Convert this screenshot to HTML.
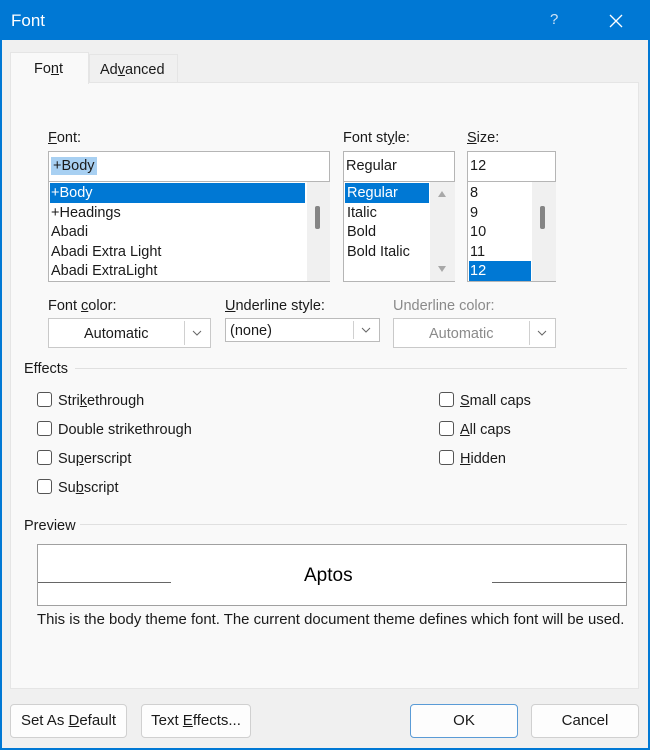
<!DOCTYPE html>
<html><head><style>
*{margin:0;padding:0;box-sizing:border-box}
body{width:650px;height:750px;background:#0078d4;font-family:"Liberation Sans",sans-serif;font-size:14.5px;color:#1a1a1a;position:relative;overflow:hidden}
.a{position:absolute}
.win{left:2px;top:40px;width:646px;height:708px;background:#f0f0f0}
.panel{left:10px;top:82px;width:629px;height:607px;background:#f9f9f9;border:1px solid #e5e5e5}
.box{background:#fff;border:1px solid #b5b5b5}
.sel{background:#0078d4;color:#fff}
.sb{background:#f0f0f0}
.thumb{background:#858585;border-radius:2px;width:5px}
.cb{width:15px;height:15px;border:1px solid #555;border-radius:3px;background:#fff}
.btn{background:#fdfdfd;border:1px solid #d0d0d0;border-radius:4px;text-align:center;line-height:31px;font-size:15px}
.dd{background:#fff;border:1px solid #c9c9c9}
.ddb{position:absolute;border-left:1px solid #d0d0d0;width:24px;top:2px;bottom:2px;right:2px}
.ddb svg{position:absolute;left:7px;top:50%;margin-top:-3px}
.hr{height:1px;background:#e0e0e0}
u{text-decoration:underline}
</style></head><body>
<div class="a" style="left:11px;top:11px;color:#fff;font-size:17px">Font</div>
<div class="a" style="left:550px;top:11px;color:#cfe3f5;font-size:15px">?</div>
<svg class="a" style="left:609px;top:14px" width="14" height="14"><path d="M1 1L13 13M13 1L1 13" stroke="#fff" stroke-width="1.3"/></svg>
<div class="a win"></div>
<div class="a panel"></div>
<div class="a" style="left:10px;top:52px;width:79px;height:32px;background:#f9f9f9;border:1px solid #e5e5e5;border-bottom:none"></div>
<div class="a" style="left:34px;top:61px">Fo<u>n</u>t</div>
<div class="a" style="left:89px;top:54px;width:89px;height:28px;background:#f0f0f0;border:1px solid #e5e5e5;border-bottom:none"></div>
<div class="a" style="left:100px;top:62px">Ad<u>v</u>anced</div>

<div class="a" style="left:48px;top:130px"><u>F</u>ont:</div>
<div class="a" style="left:343px;top:130px">Font st<u>y</u>le:</div>
<div class="a" style="left:467px;top:130px"><u>S</u>ize:</div>

<div class="a box" style="left:48px;top:151px;width:282px;height:31px"><span class="a" style="left:2px;top:5px;background:#a8d0f2;padding:1px 2px">+Body</span></div>
<div class="a box" style="left:343px;top:151px;width:112px;height:31px"><span class="a" style="left:2px;top:6px">Regular</span></div>
<div class="a box" style="left:467px;top:151px;width:89px;height:31px"><span class="a" style="left:2px;top:6px">12</span></div>

<div class="a box" style="left:48px;top:181px;width:282px;height:101px;line-height:19.6px">
 <div class="a sb" style="left:258px;top:0;width:23px;height:99px"></div><div class="a thumb" style="left:266px;top:24px;height:23px"></div>
 <div class="a sel" style="left:1px;top:1px;width:255px;height:20px"></div>
 <div class="a" style="left:2px;top:2px;color:#fff">+Body</div>
 <div class="a" style="left:2px;top:22px">+Headings</div>
 <div class="a" style="left:2px;top:41px">Abadi</div>
 <div class="a" style="left:2px;top:61px">Abadi Extra Light</div>
 <div class="a" style="left:2px;top:80px">Abadi ExtraLight</div>
</div>
<div class="a box" style="left:343px;top:181px;width:112px;height:101px;line-height:19.6px">
 <div class="a sb" style="left:86px;top:0;width:25px;height:99px"></div>
 <svg class="a" style="left:93px;top:8px" width="10" height="8"><path d="M1 7L5 1L9 7Z" fill="#a8a8a8"/></svg>
 <svg class="a" style="left:93px;top:83px" width="10" height="8"><path d="M1 1L5 7L9 1Z" fill="#a8a8a8"/></svg>
 <div class="a sel" style="left:1px;top:1px;width:84px;height:20px"></div>
 <div class="a" style="left:3px;top:2px;color:#fff">Regular</div>
 <div class="a" style="left:3px;top:22px">Italic</div>
 <div class="a" style="left:3px;top:41px">Bold</div>
 <div class="a" style="left:3px;top:61px">Bold Italic</div>
</div>
<div class="a box" style="left:467px;top:181px;width:89px;height:101px;line-height:19.6px">
 <div class="a sb" style="left:64px;top:0;width:24px;height:99px"></div><div class="a thumb" style="left:72px;top:24px;height:23px"></div>
 <div class="a sel" style="left:1px;top:79px;width:62px;height:20px"></div>
 <div class="a" style="left:2px;top:2px">8</div>
 <div class="a" style="left:2px;top:22px">9</div>
 <div class="a" style="left:2px;top:41px">10</div>
 <div class="a" style="left:2px;top:61px">11</div>
 <div class="a" style="left:2px;top:80px;color:#fff">12</div>
</div>

<div class="a" style="left:48px;top:298px">Font <u>c</u>olor:</div>
<div class="a" style="left:225px;top:298px"><u>U</u>nderline style:</div>
<div class="a" style="left:393px;top:298px;color:#8a8a8a">Underline color:</div>
<div class="a dd" style="left:48px;top:318px;width:163px;height:30px"><span class="a" style="left:35px;top:7px">Automatic</span><div class="ddb"><svg width="10" height="6"><path d="M1 1L5 5L9 1" fill="none" stroke="#666"/></svg></div></div>
<div class="a dd" style="left:225px;top:318px;width:155px;height:24px;border-color:#bbb"><span class="a" style="left:4px;top:4px">(none)</span><div class="ddb"><svg width="10" height="6"><path d="M1 1L5 5L9 1" fill="none" stroke="#666"/></svg></div></div>
<div class="a dd" style="left:393px;top:318px;width:163px;height:30px"><span class="a" style="left:35px;top:7px;color:#8a8a8a">Automatic</span><div class="ddb"><svg width="10" height="6"><path d="M1 1L5 5L9 1" fill="none" stroke="#666"/></svg></div></div>

<div class="a" style="left:24px;top:361px">Effects</div>
<div class="a hr" style="left:75px;top:368px;width:552px"></div>
<div class="a cb" style="left:37px;top:392px"></div><div class="a" style="left:58px;top:393px">Stri<u>k</u>ethrough</div>
<div class="a cb" style="left:37px;top:421px"></div><div class="a" style="left:58px;top:422px">Double strikethrough</div>
<div class="a cb" style="left:37px;top:450px"></div><div class="a" style="left:58px;top:451px">Su<u>p</u>erscript</div>
<div class="a cb" style="left:37px;top:479px"></div><div class="a" style="left:58px;top:480px">Su<u>b</u>script</div>
<div class="a cb" style="left:439px;top:392px"></div><div class="a" style="left:460px;top:393px"><u>S</u>mall caps</div>
<div class="a cb" style="left:439px;top:421px"></div><div class="a" style="left:460px;top:422px"><u>A</u>ll caps</div>
<div class="a cb" style="left:439px;top:450px"></div><div class="a" style="left:460px;top:451px"><u>H</u>idden</div>

<div class="a" style="left:24px;top:518px">Preview</div>
<div class="a hr" style="left:80px;top:524px;width:547px"></div>
<div class="a" style="left:37px;top:544px;width:590px;height:62px;background:#fff;border:1px solid #a0a0a0"></div>
<div class="a" style="left:38px;top:582px;width:133px;height:1px;background:#666"></div>
<div class="a" style="left:492px;top:582px;width:134px;height:1px;background:#666"></div>
<div class="a" style="left:304px;top:565px;font-size:19px;color:#000">Aptos</div>
<div class="a" style="left:37px;top:612px;font-size:14.9px;white-space:nowrap">This is the body theme font. The current document theme defines which font will be used.</div>

<div class="a btn" style="left:10px;top:704px;width:117px;height:34px">Set As <u>D</u>efault</div>
<div class="a btn" style="left:141px;top:704px;width:110px;height:34px">Text <u>E</u>ffects...</div>
<div class="a btn" style="left:410px;top:704px;width:108px;height:34px;border-color:#5a9bd6">OK</div>
<div class="a btn" style="left:531px;top:704px;width:108px;height:34px">Cancel</div>
</body></html>
